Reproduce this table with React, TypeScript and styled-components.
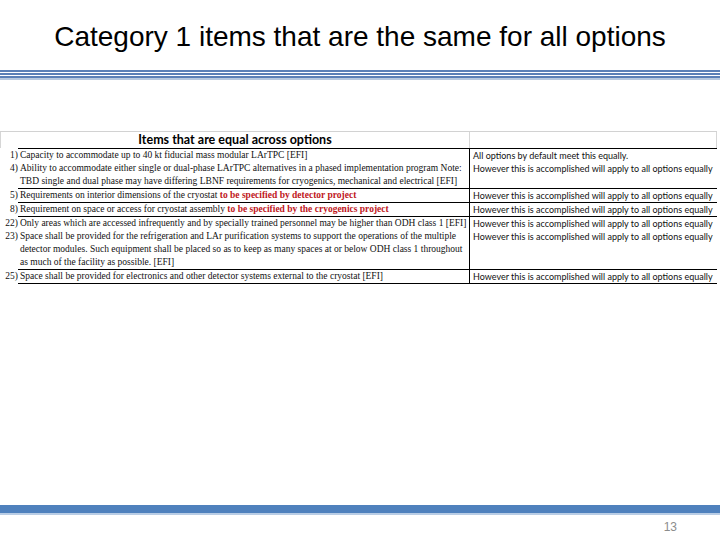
import React from 'react';
import styled, { createGlobalStyle } from 'styled-components';

const GlobalStyle = createGlobalStyle`
  html, body {
    margin: 0;
    padding: 0;
    background: #fff;
  }
  body {
    font-family: "Liberation Sans", Arial, sans-serif;
  }
`;

const Slide = styled.div`
  width: 720px;
  height: 540px;
  display: flex;
  flex-direction: column;
  background: #fff;
  overflow: hidden;
`;

const Title = styled.h1`
  margin: 0;
  height: 70px;
  box-sizing: border-box;
  padding-top: 23px;
  font-weight: normal;
  font-size: 28px;
  line-height: 28px;
  text-align: center;
  color: #000;
`;

const Rule = styled.div`
  display: flex;
  flex-direction: column;
`;

const Stripe = styled.div<{ $h: number; $color: string }>`
  height: ${(p) => p.$h}px;
  background: ${(p) => p.$color};
`;

const Body = styled.div`
  flex: 1;
  padding-top: 51px;
`;

const Table = styled.div`
  width: 717px;
  display: flex;
  flex-direction: column;
`;

const HeaderRow = styled.div`
  display: grid;
  grid-template-columns: 469px 248px;
  height: 17px;
  box-sizing: border-box;
  border-top: 1px solid #d2d2d2;
`;

const HeaderCell = styled.div<{ $right?: boolean }>`
  border-left: 1px solid #d6d6d6;
  border-right: ${(p) => (p.$right ? '1px solid #d6d6d6' : 'none')};
  font-family: Lato, "Liberation Sans", sans-serif;
  font-weight: 700;
  font-size: 12.5px;
  line-height: 16px;
  text-align: center;
  color: #000;
`;

// numbers | requirement | comment
const Block = styled.div`
  display: grid;
  grid-template-columns: 18px 451px 248px;
`;

const NumCol = styled.div`
  padding-top: 1px;
  font-family: "Liberation Serif", "Times New Roman", serif;
  font-size: 9.5px;
  color: #111;
  text-align: right;
`;

const TextCol = styled.div<{ $last?: boolean }>`
  border-top: 1px solid #000;
  border-bottom: ${(p) => (p.$last ? '1px solid #000' : 'none')};
  font-family: "Liberation Serif", "Times New Roman", serif;
  font-size: 9.5px;
  color: #111;
  padding-left: 2px;
`;

const NoteCol = styled.div<{ $last?: boolean }>`
  border-top: 1px solid #000;
  border-left: 1px solid #000;
  border-bottom: ${(p) => (p.$last ? '1px solid #000' : 'none')};
  font-family: Lato, "Liberation Sans", sans-serif;
  font-size: 9px;
  color: #111;
  padding-left: 3px;
`;

const Line = styled.div`
  height: 13px;
  line-height: 13px;
  white-space: nowrap;
`;

const Red = styled.span`
  color: #c0161b;
  font-weight: bold;
`;

const FooterBar = styled.div`
  display: flex;
  flex-direction: column;
`;

const PageRow = styled.div`
  height: 25px;
  padding-right: 43px;
  text-align: right;
  font-size: 12px;
  line-height: 25px;
  color: #8c8c8c;
`;

const SAME = 'However this is accomplished will apply to all options equally';

type Row = { nums: string[]; text: React.ReactNode[]; notes: string[] };

const rows: Row[] = [
  {
    nums: ['1)', '4)', ''],
    text: [
      'Capacity to accommodate up to 40 kt fiducial mass modular LArTPC [EFI]',
      'Ability to accommodate either single or dual-phase LArTPC alternatives in a phased implementation program Note:',
      'TBD single and dual phase may have differing LBNF requirements for cryogenics, mechanical and electrical  [EFI]',
    ],
    notes: ['All options by default meet this equally.', SAME, ''],
  },
  {
    nums: ['5)'],
    text: [
      <>Requirements on interior dimensions of the cryostat <Red>to be specified by detector project</Red></>,
    ],
    notes: [SAME],
  },
  {
    nums: ['8)'],
    text: [
      <>Requirement on space or access for cryostat assembly <Red>to be specified by the cryogenics project</Red></>,
    ],
    notes: [SAME],
  },
  {
    nums: ['22)', '23)', '', ''],
    text: [
      'Only areas which are accessed infrequently and by specially trained personnel may be higher than ODH class 1 [EFI]',
      'Space shall be provided for the refrigeration and LAr purification systems to support the operations of the multiple',
      'detector modules.  Such equipment shall be placed so as to keep as many spaces at or below ODH class 1 throughout',
      'as much of the facility as possible. [EFI]',
    ],
    notes: [SAME, SAME, '', ''],
  },
  {
    nums: ['25)'],
    text: ['Space shall be provided for electronics and other detector systems external to the cryostat [EFI]'],
    notes: [SAME],
  },
];

export default function App() {
  return (
    <>
      <GlobalStyle />
      <Slide>
        <Title>Category 1 items that are the same for all options</Title>
        <Rule>
          <Stripe $h={2} $color="#5b80b6" />
          <Stripe $h={1} $color="#ffffff" />
          <Stripe $h={2} $color="#5b80b6" />
          <Stripe $h={1} $color="#ffffff" />
          <Stripe $h={2} $color="#5b80b6" />
          <Stripe $h={2} $color="#b8c9de" />
        </Rule>
        <Body>
          <Table>
            <HeaderRow>
              <HeaderCell>Items that are equal across options</HeaderCell>
              <HeaderCell $right />
            </HeaderRow>
            {rows.map((row, i) => {
              const last = i === rows.length - 1;
              return (
                <Block key={i}>
                  <NumCol>
                    {row.nums.map((n, j) => (
                      <Line key={j}>{n}</Line>
                    ))}
                  </NumCol>
                  <TextCol $last={last}>
                    {row.text.map((t, j) => (
                      <Line key={j}>{t}</Line>
                    ))}
                  </TextCol>
                  <NoteCol $last={last}>
                    {row.notes.map((t, j) => (
                      <Line key={j}>{t}</Line>
                    ))}
                  </NoteCol>
                </Block>
              );
            })}
          </Table>
        </Body>
        <FooterBar>
          <Stripe $h={8} $color="#4f81bd" />
          <Stripe $h={2} $color="#b9cde5" />
        </FooterBar>
        <PageRow>13</PageRow>
      </Slide>
    </>
  );
}
